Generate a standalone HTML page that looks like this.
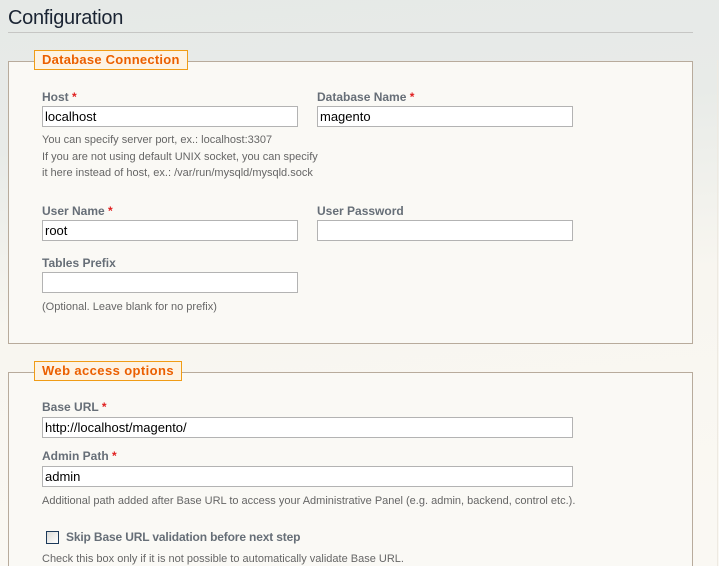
<!DOCTYPE html>
<html><head><meta charset="utf-8"><style>
*{margin:0;padding:0;box-sizing:border-box}
html{width:719px;height:566px;overflow:hidden}
body{width:719px;height:566px;overflow:hidden;position:relative;font-family:"Liberation Sans",Arial,sans-serif;
background:linear-gradient(175deg,#e6e9e7 0px,#e8ebe8 150px,#f8f6f0 330px,#faf8f3 566px)}
h1{position:absolute;left:8px;top:7px;font-size:20px;font-weight:normal;color:#1a2433;letter-spacing:-0.3px}
.hr{position:absolute;left:8px;top:32px;width:685px;height:1px;background:#c6c6c4}
.fs{position:absolute;left:8px;width:685px;background:#faf9f5;border:1px solid #b8ab9c}
.lg{position:absolute;left:34px;height:20px;background:#fdf3e4;border:1px solid #f09c16;color:#eb5f00;font-weight:bold;font-size:13px;padding:2px 7px;line-height:14px;letter-spacing:0.25px}
.lb{position:absolute;font-size:12px;font-weight:bold;color:#666e77;white-space:nowrap}
.lb i{color:#e02020;font-style:normal}
.in{position:absolute;height:21px;background:#fff;border:1px solid #b3b3b3;font-size:13px;color:#000;padding:3px 2px;line-height:14px}
.h{position:absolute;font-size:11px;color:#666;line-height:16.5px;white-space:nowrap}
</style></head><body>
<h1>Configuration</h1>
<div class="hr"></div>
<div style="position:absolute;left:717px;top:60px;width:1px;height:506px;background:#eeeae2"></div>
<div class="fs" style="top:61px;height:283px"></div>
<div class="lg" style="top:50px">Database Connection</div>
<div class="lb" style="left:42px;top:90px">Host <i>*</i></div>
<div class="in" style="left:42px;top:106px;width:256px">localhost</div>
<div class="lb" style="left:317px;top:90px">Database Name <i>*</i></div>
<div class="in" style="left:317px;top:106px;width:256px">magento</div>
<div class="h" style="left:42px;top:132px">You can specify server port, ex.: localhost:3307<br>If you are not using default UNIX socket, you can specify<br>it here instead of host, ex.: /var/run/mysqld/mysqld.sock</div>
<div class="lb" style="left:42px;top:204px">User Name <i>*</i></div>
<div class="in" style="left:42px;top:220px;width:256px">root</div>
<div class="lb" style="left:317px;top:204px">User Password</div>
<div class="in" style="left:317px;top:220px;width:256px"></div>
<div class="lb" style="left:42px;top:256px">Tables Prefix</div>
<div class="in" style="left:42px;top:272px;width:256px"></div>
<div class="h" style="left:42px;top:299px">(Optional. Leave blank for no prefix)</div>

<div class="fs" style="top:372px;height:200px"></div>
<div class="lg" style="top:361px;letter-spacing:0.4px">Web access options</div>
<div class="lb" style="left:42px;top:400px">Base URL <i>*</i></div>
<div class="in" style="left:42px;top:417px;width:531px">http://localhost/magento/</div>
<div class="lb" style="left:42px;top:449px">Admin Path <i>*</i></div>
<div class="in" style="left:42px;top:466px;width:531px">admin</div>
<div class="h" style="left:42px;top:493px">Additional path added after Base URL to access your Administrative Panel (e.g. admin, backend, control etc.).</div>
<div style="position:absolute;left:46px;top:531px;width:13px;height:13px;border:1px solid #1c3a5a;background:linear-gradient(135deg,#dcdcd8,#fff)"></div>
<div class="lb" style="left:66px;top:530px;letter-spacing:-0.15px">Skip Base URL validation before next step</div>
<div class="h" style="left:42px;top:551px">Check this box only if it is not possible to automatically validate Base URL.</div>
</body></html>
